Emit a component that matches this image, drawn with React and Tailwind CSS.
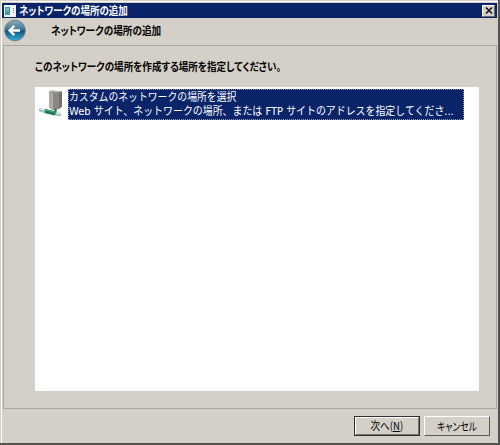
import { useState } from 'react'

const locations = [
  {
    name: 'カスタムのネットワークの場所を選択',
    description: 'Web サイト、ネットワークの場所、または FTP サイトのアドレスを指定してくださ...',
  },
]

function WindowIcon() {
  return (
    <svg width="12" height="12" viewBox="0 0 12 12" shapeRendering="crispEdges">
      <rect width="12" height="12" fill="#e9f1f2" />
      <rect x="1" y="2" width="5" height="8" fill="#48999b" />
      <rect x="2" y="3" width="3" height="3" fill="#78bdb9" />
      <rect x="7" y="2" width="4" height="8" fill="#fff" />
      <rect x="9" y="3" width="1" height="1" fill="#6b8e9e" />
      <rect x="9" y="5" width="1" height="1" fill="#6b8e9e" />
      <rect x="9" y="7" width="1" height="1" fill="#6b8e9e" />
    </svg>
  )
}

function BackIcon() {
  return (
    <svg width="22" height="23" viewBox="0 0 22 23">
      <defs>
        <linearGradient id="ball" x1="0" y1="0" x2="0" y2="1">
          <stop offset="0" stopColor="#8faebc" />
          <stop offset="0.45" stopColor="#3c7595" />
          <stop offset="0.52" stopColor="#10527d" />
          <stop offset="1" stopColor="#32b4dc" />
        </linearGradient>
      </defs>
      <circle cx="11" cy="11.5" r="10.3" fill="url(#ball)" stroke="#55727f" strokeWidth="0.8" />
      <path d="M16 11.5H6M10.3 6.8L5.7 11.5L10.3 16.2" fill="none" stroke="#fff" strokeWidth="2.5" />
    </svg>
  )
}

function NetworkIcon() {
  return (
    <svg width="26" height="30" viewBox="0 0 26 30">
      <path d="M11 2.5L14 1.5L24 2.5V17.5L21 20L15 21L11 18.5Z" fill="#8a8880" />
      <path d="M11 2.5L14 1.5L24 2.5L21 3.5Z" fill="#b9b7b1" />
      <path d="M11 2.5L14.5 4V21L11 18.5Z" fill="#aaa8a2" />
      <path d="M21 3.5L24 2.5V17.5L21 20Z" fill="#75736d" />
      <path d="M14.5 4V20.5" stroke="#bebcb6" strokeWidth="0.6" />
      <path d="M17.5 19.5V23" stroke="#227d52" strokeWidth="2.4" />
      <path d="M2.5 21L21.5 25.5" stroke="#a9bdc8" strokeWidth="3.6" strokeLinecap="round" />
      <path d="M7 22L17.5 24.5" stroke="#167b52" strokeWidth="4.2" />
      <path d="M7 20.8L17 23.2" stroke="#4aae80" strokeWidth="1" />
      <path d="M2.5 20.2L6 21M18.5 24L22 24.8" stroke="#e0edf2" strokeWidth="1.2" />
    </svg>
  )
}

export default function App() {
  const [selected, setSelected] = useState(0)

  return (
    <div className="flex h-[445px] w-[500px] flex-col overflow-hidden border-r-2 border-b-2 border-[#55534f] bg-[#d4d0c8] font-['Noto_Sans_CJK_JP',sans-serif] text-[11px] text-black [font-feature-settings:'palt']">
      <div className="flex min-h-0 flex-1 flex-col border-t border-l border-[#d4d0c8]">
        <div className="flex min-h-0 flex-1 flex-col border-t border-l border-white pr-px">
          {/* Title bar */}
          <div className="mt-px flex h-[15px] shrink-0 items-center bg-[#0a246a] pr-[2px] pl-[2px]">
            <WindowIcon />
            <span className="mb-px ml-[3px] origin-left scale-x-[0.865] leading-[13px] font-bold whitespace-nowrap text-white">ネットワークの場所の追加</span>
            <button aria-label="閉じる" className="ml-auto flex h-[12px] w-[13px] items-center justify-center border border-t-white border-l-white border-r-[#686660] border-b-[#686660] bg-[#d4d0c8]">
              <svg width="8" height="7" viewBox="0 0 8 7">
                <path d="M1 0.5L7 6.5M7 0.5L1 6.5" stroke="#111" strokeWidth="1.5" />
              </svg>
            </button>
          </div>

          {/* Header */}
          <div className="flex h-[27px] shrink-0 items-center pb-[2px] pl-[2px]">
            <BackIcon />
            <span className="mb-px ml-[25px] origin-left scale-x-[0.875] leading-[18px] font-bold whitespace-nowrap">ネットワークの場所の追加</span>
          </div>

          {/* Page body */}
          <div className="ml-px h-[364px] shrink-0 border border-[#aaa6a0] pl-[31px]">
            <p className="mt-[11px] h-[30px] w-max origin-left scale-x-[0.868] leading-[18px] font-bold whitespace-nowrap">
              このネットワークの場所を作成する場所を指定してください。
            </p>
            <div className="h-[304px] w-[444px] bg-white pt-[2px] pl-[3px]">
              {locations.map((loc, i) => (
                <div key={loc.name} onClick={() => setSelected(i)} className="flex [font-feature-settings:normal]">
                  <div className="w-[30px] shrink-0">
                    <NetworkIcon />
                  </div>
                  <div className={selected === i ? 'h-[31px] w-[396px] border border-dotted border-[#9299ac] bg-[#0a246a] text-white' : 'h-[31px] w-[396px]'}>
                    <div className="w-max origin-left scale-x-[0.895] leading-[13px] whitespace-nowrap">{loc.name}</div>
                    <div className="w-max origin-left scale-x-[0.902] font-['DejaVu_Sans','Noto_Sans_CJK_JP',sans-serif] leading-[18px] whitespace-nowrap">{loc.description}</div>
                  </div>
                </div>
              ))}
            </div>
          </div>

          {/* Buttons */}
          <div className="flex gap-[4px] pt-[7px] pl-[352px]">
            <button className="h-[20px] w-[66px] border border-[#303030] bg-[#d4d0c8]">
              <span className="flex h-full items-center justify-center border border-t-white border-l-white border-r-[#77746f] border-b-[#77746f] pb-px">
                <span className="scale-x-[0.87] leading-[15px] whitespace-nowrap">次へ(<u>N</u>)</span>
              </span>
            </button>
            <button className="flex h-[20px] w-[66px] items-center justify-center border border-t-white border-l-white border-r-[#5b5955] border-b-[#5b5955] bg-[#d4d0c8] pb-px">
              <span className="scale-x-[0.8] leading-[16px] whitespace-nowrap">キャンセル</span>
            </button>
          </div>
        </div>
      </div>
    </div>
  )
}
